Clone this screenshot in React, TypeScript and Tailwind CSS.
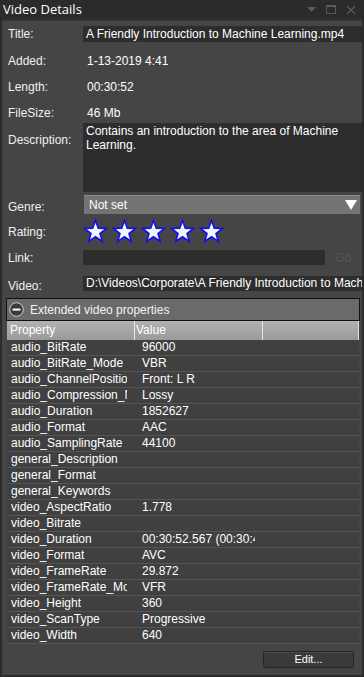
import React from 'react';

const font = { fontFamily: '"Liberation Sans", Arial, sans-serif' };

const PROPS: [string, string][] = [
  ['audio_BitRate', '96000'],
  ['audio_BitRate_Mode', 'VBR'],
  ['audio_ChannelPositions', 'Front: L R'],
  ['audio_Compression_Mode', 'Lossy'],
  ['audio_Duration', '1852627'],
  ['audio_Format', 'AAC'],
  ['audio_SamplingRate', '44100'],
  ['general_Description', ''],
  ['general_Format', ''],
  ['general_Keywords', ''],
  ['video_AspectRatio', '1.778'],
  ['video_Bitrate', ''],
  ['video_Duration', '00:30:52.567 (00:30:42.567)'],
  ['video_Format', 'AVC'],
  ['video_FrameRate', '29.872'],
  ['video_FrameRate_Mode', 'VFR'],
  ['video_Height', '360'],
  ['video_ScanType', 'Progressive'],
  ['video_Width', '640'],
];

function Star() {
  return (
    <svg width="25" height="25" viewBox="0 0 25 25">
      <polygon
        points="12.5,1.5 15.3,9.3 23.5,9.4 17,14.5 19.3,22.5 12.5,17.8 5.7,22.5 8,14.5 1.5,9.4 9.7,9.3"
        fill="#f2f6ff"
        stroke="#1010f0"
        strokeWidth="1.6"
        strokeLinejoin="miter"
      />
    </svg>
  );
}

function Label({ children }: { children: React.ReactNode }) {
  return <span className="w-[75px] shrink-0 text-[12px] text-[#f0f0f0]">{children}</span>;
}

export default function App() {
  return (
    <div className="w-[364px] h-[677px] bg-[#2b2b2b] flex flex-col overflow-hidden" style={font}>
      {/* title bar */}
      <div className="h-[19px] shrink-0 flex items-center px-[3px]">
        <span className="text-[13px] text-white leading-none" style={{ fontFamily: '"Open Sans", "Liberation Sans", sans-serif' }}>
          Video Details
        </span>
        <div className="ml-auto flex items-center gap-[10px] pr-[5px]">
          <svg width="9" height="6" viewBox="0 0 9 6"><polygon points="0,0 9,0 4.5,5" fill="#5a5a5a" /></svg>
          <svg width="10" height="9" viewBox="0 0 10 9"><rect x="0.5" y="0.5" width="9" height="8" fill="none" stroke="#5a5a5a" /><rect x="0" y="0" width="10" height="2" fill="#5a5a5a" /></svg>
          <svg width="10" height="10" viewBox="0 0 10 10"><path d="M1 1 L9 9 M9 1 L1 9" stroke="#5a5a5a" strokeWidth="1.3" /></svg>
        </div>
      </div>

      {/* panel */}
      <div className="flex-1 mx-[2px] mb-[2px] bg-[#454545] border-t-[2px] border-[#333333] flex flex-col min-h-0">
        <div className="flex flex-col pl-[6px] pr-0 pt-[5px]">
          <div className="flex items-center h-[16px]">
            <Label>Title:</Label>
            <div className="flex-1 h-[16px] bg-[#2d2d2d] pl-[3px] text-[12px] text-white leading-[16px] whitespace-nowrap overflow-hidden">
              A Friendly Introduction to Machine Learning.mp4
            </div>
          </div>
          <div className="flex items-center h-[16px] mt-[11px]">
            <Label>Added:</Label>
            <span className="pl-[4px] text-[12px] text-white">1-13-2019 4:41</span>
          </div>
          <div className="flex items-center h-[16px] mt-[10px]">
            <Label>Length:</Label>
            <span className="pl-[4px] text-[12px] text-white">00:30:52</span>
          </div>
          <div className="flex items-center h-[16px] mt-[10px]">
            <Label>FileSize:</Label>
            <span className="pl-[4px] text-[12px] text-white">46 Mb</span>
          </div>
          <div className="flex items-start h-[69px] mt-[2px]">
            <span className="w-[75px] shrink-0 pt-[8px] text-[12px] text-[#f0f0f0]">Description:</span>
            <div className="flex-1 h-[69px] bg-[#2d2d2d] pl-[3px] pt-[1px] text-[12px] text-white leading-[14px]">
              Contains an introduction to the area of Machine Learning.
            </div>
          </div>
          <div className="flex items-center h-[19px] mt-[3px]">
            <span className="w-[76px] shrink-0 pt-[4px] text-[12px] text-[#f0f0f0]">Genre:</span>
            <div className="flex-1 h-[19px] bg-[#747474] border-t border-[#8a8a8a] pl-[5px] pr-[3px] flex items-center text-[12px] text-white mr-[2px]">
              <span>Not set</span>
              <svg className="ml-auto" width="12" height="10" viewBox="0 0 12 10"><polygon points="0,0 12,0 6,10" fill="#ffffff" /></svg>
            </div>
          </div>
          <div className="flex items-center h-[25px] mt-[5px]">
            <Label>Rating:</Label>
            <div className="flex gap-[4px]">
              <Star />
              <Star />
              <Star />
              <Star />
              <Star />
            </div>
          </div>
          <div className="flex items-center h-[15px] mt-[6px]">
            <Label>Link:</Label>
            <div className="w-[242px] h-[15px] bg-[#2d2d2d]" />
            <span className="ml-[10px] text-[12px] text-[#555555]">Go</span>
          </div>
          <div className="flex items-center h-[15px] mt-[11px]">
            <span className="w-[75px] shrink-0 pt-[4px] text-[12px] text-[#f0f0f0]">Video:</span>
            <div className="flex-1 h-[15px] bg-[#2d2d2d] pl-[3px] text-[12px] text-white leading-[15px] whitespace-nowrap overflow-hidden">
              D:\Videos\Corporate\A Friendly Introduction to Machine Learning.mp4
            </div>
          </div>
        </div>

        {/* extended properties */}
        <div className="ml-[4px] mr-[2px] mt-[7px] flex flex-col">
          <div className="h-[23px] bg-[#6a6a6a] border border-[#111111] flex items-center pl-[2px]">
            <svg width="15" height="15" viewBox="0 0 15 15">
              <circle cx="7.5" cy="7.5" r="6.8" fill="#3b3b3b" stroke="#cfcfcf" strokeWidth="1" />
              <rect x="3.5" y="6.6" width="8" height="2" fill="#ffffff" />
            </svg>
            <span className="ml-[6px] text-[12px] text-[#f2f2f2]">Extended video properties</span>
          </div>
          <div className="flex flex-col ml-[1px] mr-[1px] bg-[#404040]">
            <div className="flex h-[19px] bg-gradient-to-b from-[#b2b2b2] to-[#9a9a9a] text-[12px] text-white">
              <div className="w-[128px] pl-[3px] leading-[19px] border-r border-[#e6e6e6]">Property</div>
              <div className="w-[128px] pl-[1px] leading-[19px] border-r border-[#e6e6e6]">Value</div>
              <div className="flex-1 border-r border-[#e6e6e6]" />
            </div>
            {PROPS.map(([k, v]) => (
              <div key={k} className="flex h-[16px] border-b border-[#555555] text-[12px] text-white leading-[15px]">
                <div className="w-[120px] shrink-0 pl-[4px] whitespace-nowrap overflow-hidden">{k}</div>
                <div className="w-[128px] shrink-0 pl-[15px] whitespace-nowrap overflow-hidden">{v}</div>
              </div>
            ))}
          </div>
        </div>

        <div className="flex justify-end pr-[8px] mt-[7px]">
          <button className="w-[91px] h-[17px] bg-[#3a3a3a] border border-[#262626] rounded-[2px] text-[11px] text-white leading-[15px] shadow-[inset_0_1px_0_#4a4a4a]">
            Edit...
          </button>
        </div>
      </div>
    </div>
  );
}
